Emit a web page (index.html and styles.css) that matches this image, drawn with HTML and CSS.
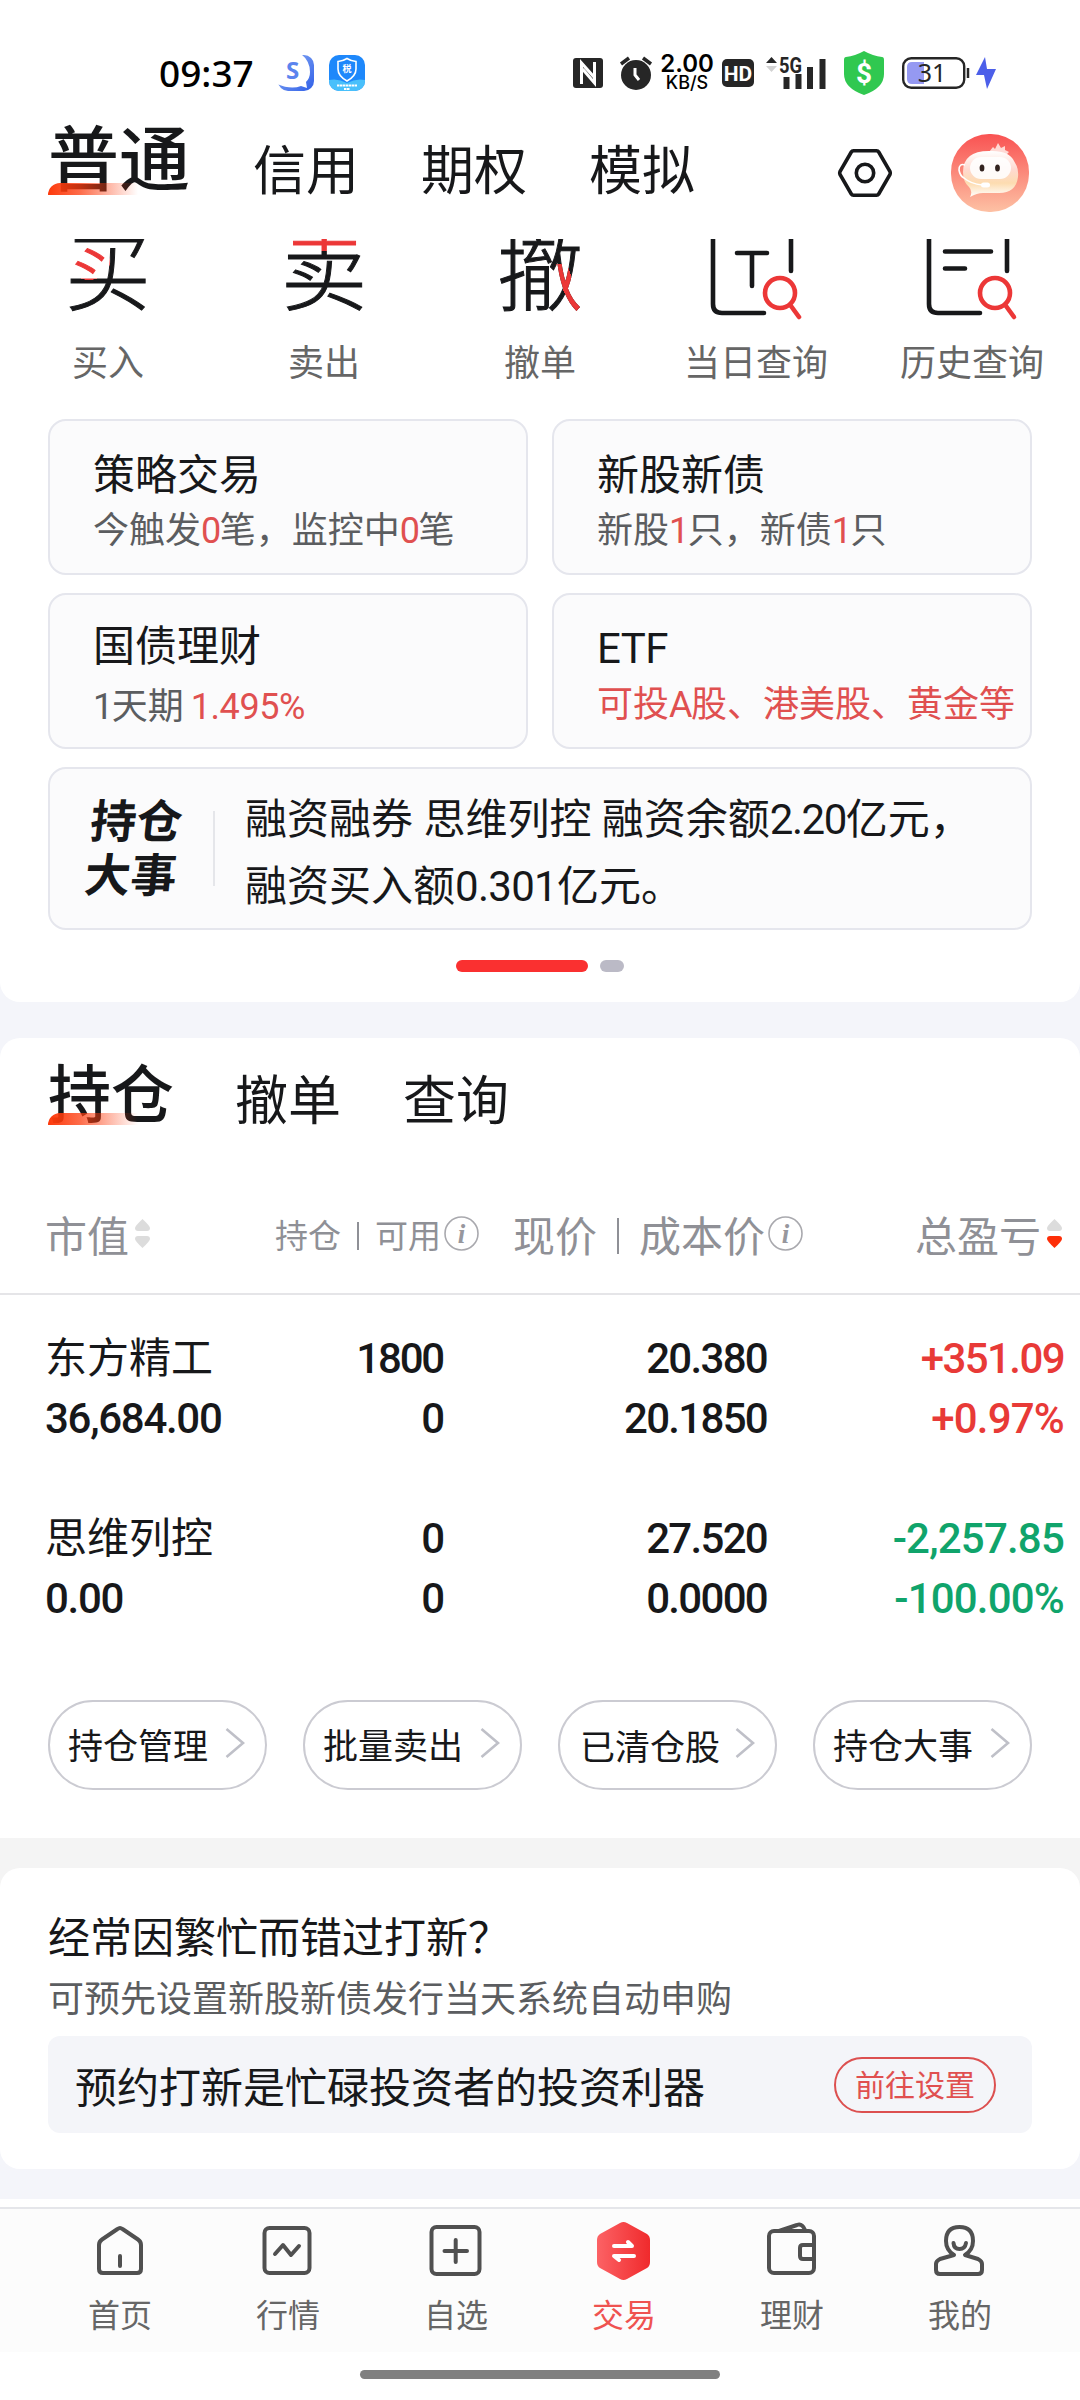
FILE: index.html
```html
<!DOCTYPE html>
<html lang="zh-CN">
<head>
<meta charset="utf-8">
<title>交易</title>
<link rel="stylesheet" href="styles.css">
</head>
<body>
<div class="screen">
  <header class="statusbar">
    <div class="status-left">
      <span class="clock">09:37</span>
      <svg class="app-icon" viewBox="0 0 36 36"><defs><linearGradient id="ga" x1="0" y1="0" x2="1" y2="1"><stop offset="0" stop-color="#8fb0f5"/><stop offset="1" stop-color="#2f5fe8"/></linearGradient></defs><rect width="36" height="36" rx="10" fill="url(#ga)"/><path d="M-1 -1H23Q32 6 32 17Q32 23 28 27L29 33L23 31Q13 35 -1 29Z" fill="#fff"/><text x="8" y="24" class="ic-s">S</text></svg>
      <svg class="app-icon app-icon-tax" viewBox="0 0 36 36"><rect width="36" height="36" rx="10" fill="#1e88fb"/><path d="M0 25Q9 23 18 28Q27 23 36 25V26A10 10 0 0 1 26 36H10A10 10 0 0 1 0 26Z" fill="#49c0fb"/><path d="M18 3.500Q22 6 27 6.500V14Q27 21 18 26Q9 21 9 14V6.500Q14 6 18 3.500Z" fill="none" stroke="#fff" stroke-width="1.600"/><text x="18" y="17" text-anchor="middle" class="ic-tax">税</text><path d="M8 30.500H28M15 34H21" stroke="#fff" stroke-width="2" stroke-dasharray="2.500 .5"/></svg>
    </div>
    <div class="status-right">
      <svg class="nfc" width="30" height="30" viewBox="0 0 30 30"><rect width="30" height="30" rx="3" fill="#262626"/><path d="M8.500 26V5L21 19M21.500 4V25L9.500 11" fill="none" stroke="#fff" stroke-width="3"/></svg>
      <svg class="alarm" width="32" height="34" viewBox="0 0 32 34"><circle cx="16" cy="19" r="15" fill="#262626"/><path d="M1 8L9 2M31 8L23 2" stroke="#262626" stroke-width="3.500"/><path d="M15 12V19L19 24" fill="none" stroke="#fff" stroke-width="3"/></svg>
      <div class="speed"><span class="speed-n">2.00</span><span class="speed-u">KB/S</span></div>
      <svg class="hd" width="32" height="28" viewBox="0 0 32 28"><rect width="32" height="28" rx="5" fill="#262626"/><text x="16" y="22" text-anchor="middle" class="ic-hd">HD</text></svg>
      <svg class="signal" width="60" height="34" viewBox="0 0 60 34"><path d="M0 7L5.500 1L11 7Z" fill="#262626"/><path d="M0 10L5.500 16L11 10Z" fill="#d2d2d2"/><text x="13" y="17" class="ic-5g" textLength="23" lengthAdjust="spacingAndGlyphs">5G</text><path d="M17.500 21h6v12h-6zM29.500 18h6v15h-6zM41 11h6v22h-6zM53.500 3h6v30h-6z" fill="#262626"/></svg>
      <svg class="shield" width="40" height="44" viewBox="0 0 40 44"><path d="M20 0Q29 5 38 6Q40 6 40 9V23Q40 37 20 44Q0 37 0 23V9Q0 6 2 6Q11 5 20 0Z" fill="#30c850"/><text x="20" y="32" text-anchor="middle" class="ic-dollar">$</text></svg>
      <svg class="battery" width="68" height="32" viewBox="0 0 68 32"><rect x="1.200" y="1.200" width="61" height="29.600" rx="8" fill="#fff" stroke="#262626" stroke-width="2.400"/><path d="M10 5H22V27H10Q5 27 5 22V10Q5 5 10 5Z" fill="#9599f2"/><path d="M66 11V21" stroke="#262626" stroke-width="2.500"/><text x="30" y="25" text-anchor="middle" class="ic-bat">31</text></svg>
      <svg class="bolt" width="20" height="32" viewBox="0 0 20 32"><path d="M9 0L0 18H8L11 32L20 12H11Z" fill="#4c5fe9"/></svg>
    </div>
  </header>

  <nav class="topnav">
    <div class="tab tab-active">普通</div>
    <div class="tab">信用</div>
    <div class="tab">期权</div>
    <div class="tab">模拟</div>
    <svg class="gear" width="54" height="48" viewBox="0 0 54 48"><path d="M15.500 1.800H38.500Q40 1.800 40.700 3L52 22.500Q52.600 24 52 25.500L40.700 45Q40 46.200 38.500 46.200H15.500Q14 46.200 13.300 45L2 25.500Q1.400 24 2 22.500L13.300 3Q14 1.800 15.500 1.800Z" fill="none" stroke="#17181a" stroke-width="3.600"/><circle cx="27" cy="24" r="8.700" fill="none" stroke="#17181a" stroke-width="3.600"/></svg>
    <svg class="avatar" width="78" height="78" viewBox="0 0 78 78"><defs><linearGradient id="gb" x1="0" y1="0" x2="0" y2="1"><stop offset="0" stop-color="#f95252"/><stop offset="1" stop-color="#fdc1a4"/></linearGradient><linearGradient id="gc" x1="0" y1="0" x2="0" y2="1"><stop offset="0" stop-color="#fff"/><stop offset=".4" stop-color="#ffd9d0"/><stop offset=".7" stop-color="#fddcb0"/><stop offset="1" stop-color="#fff"/></linearGradient></defs><rect width="78" height="78" rx="38" fill="url(#gb)"/><path d="M38 18L42 13L44 15L47 9L50 14L54 12V16L58 18L55 21Z" fill="#ffd9d4"/><path d="M12 38Q12 17 38 17Q58 16 63 27Q68 34 67 43Q65 59 48 59H32Q26 59 19 63Q22 57 18 53Q12 48 12 38Z" fill="url(#gc)"/><rect x="19" y="23" width="41" height="22" rx="11" fill="#fff" opacity=".88"/><ellipse cx="31" cy="34" rx="2.400" ry="3.600" fill="#33231f"/><ellipse cx="46.500" cy="34" rx="2.400" ry="3.600" fill="#33231f"/><path d="M14 31Q8 29 8 36Q9 42 13 44Q20 50 31 51" fill="none" stroke="#fff" stroke-width="1.600"/><rect x="30" y="48.500" width="9" height="5" rx="2.500" fill="#fff"/></svg>
  </nav>

  <section class="panel panel-top">
    <div class="quick">
      <div class="quick-item"><div class="quick-icon"><span class="glyph glyph-buy">买</span></div><span class="quick-label">买入</span></div>
      <div class="quick-item"><div class="quick-icon"><span class="glyph glyph-sell">卖</span></div><span class="quick-label">卖出</span></div>
      <div class="quick-item"><div class="quick-icon"><span class="glyph glyph-cancel">撤</span></div><span class="quick-label">撤单</span></div>
      <div class="quick-item"><div class="quick-icon"><svg width="92" height="82" viewBox="0 0 92 82"><g fill="none" stroke="#17181a" stroke-width="4.600" stroke-linecap="round"><path d="M3 -5V65Q3 74 12 74H54M81 -5V32M27 14H57M42 14V47"/></g><g fill="none" stroke="#ec3737" stroke-width="4.600" stroke-linecap="round"><circle cx="70" cy="54" r="15"/><path d="M81 67L89 78"/></g></svg></div><span class="quick-label">当日查询</span></div>
      <div class="quick-item"><div class="quick-icon"><svg width="92" height="82" viewBox="0 0 92 82"><g fill="none" stroke="#17181a" stroke-width="4.600" stroke-linecap="round"><path d="M3 -5V65Q3 74 12 74H54M81 -5V32M19 12.500H65M19 29.500H39"/></g><g fill="none" stroke="#ec3737" stroke-width="4.600" stroke-linecap="round"><circle cx="69" cy="54" r="15"/><path d="M80 67L88 78"/></g></svg></div><span class="quick-label">历史查询</span></div>
    </div>
    <div class="cards">
      <div class="card"><div class="card-title">策略交易</div><div class="card-sub">今触发<b class="num hot">0</b>笔，监控中<b class="num hot">0</b>笔</div></div>
      <div class="card"><div class="card-title">新股新债</div><div class="card-sub">新股<b class="num hot">1</b>只，新债<b class="num hot">1</b>只</div></div>
      <div class="card card-low"><div class="card-title">国债理财</div><div class="card-sub card-sub-low"><b class="num">1</b>天期 <b class="num num-rate hot">1.495%</b></div></div>
      <div class="card card-low"><div class="card-title card-title-etf"><span class="num num-etf">ETF</span></div><div class="card-sub card-sub-etf hot">可投<b class="num">A</b>股、港美股、黄金等</div></div>
      <div class="card card-news">
        <div class="news-logo"><span>持仓</span><span>大事</span></div>
        <div class="news-rule"></div>
        <div class="news-text">融资融券 思维列控 融资余额<span class="num">2.20</span>亿元，<br>融资买入额<span class="num num-buy">0.301</span>亿元。</div>
      </div>
    </div>
    <div class="pager"><i class="pager-on"></i><i class="pager-off"></i></div>
  </section>

  <section class="panel panel-holdings">
    <div class="subtabs">
      <div class="tab tab-active tab-active-sm">持仓</div>
      <div class="tab">撤单</div>
      <div class="tab">查询</div>
    </div>
    <div class="thead">
      <div class="th th-value">市值<svg class="sort" width="15" height="30" viewBox="0 0 15 30"><path d="M7.500 0Q15 7 15 9Q15 12 12 12H3Q0 12 0 9Q0 7 7.500 0Z" fill="#dcdcdc"/><path d="M7.500 29Q15 22 15 20Q15 17 12 17H3Q0 17 0 20Q0 22 7.500 29Z" fill="#dcdcdc"/></svg></div>
      <div class="th th-pos">持仓<i class="bar"></i>可用<svg class="info" width="35" height="35" viewBox="0 0 35 35"><circle cx="17.500" cy="17.500" r="16.500" fill="none" stroke="#a9a9ae" stroke-width="1.600"/><text x="17.500" y="26.500" text-anchor="middle" class="ic-i">i</text></svg></div>
      <div class="th th-price">现价<i class="bar bar-lg"></i>成本价<svg class="info" width="35" height="35" viewBox="0 0 35 35"><circle cx="17.500" cy="17.500" r="16.500" fill="none" stroke="#a9a9ae" stroke-width="1.600"/><text x="17.500" y="26.500" text-anchor="middle" class="ic-i">i</text></svg></div>
      <div class="th th-pl">总盈亏<svg class="sort" width="15" height="30" viewBox="0 0 15 30"><path d="M7.500 0Q15 7 15 9Q15 12 12 12H3Q0 12 0 9Q0 7 7.500 0Z" fill="#dcdcdc"/><path d="M7.500 29Q15 22 15 20Q15 17 12 17H3Q0 17 0 20Q0 22 7.500 29Z" fill="#fd2e08"/></svg></div>
    </div>
    <div class="rows">
      <div class="row">
        <div class="cell cell-value"><span class="stock">东方精工</span><span>36,684.00</span></div>
        <div class="cell cell-r cell-pos"><span>1800</span><span>0</span></div>
        <div class="cell cell-r"><span>20.380</span><span>20.1850</span></div>
        <div class="cell cell-r cell-pl up"><span class="tight">+351.09</span><span>+0.97%</span></div>
      </div>
      <div class="row">
        <div class="cell cell-value"><span class="stock">思维列控</span><span>0.00</span></div>
        <div class="cell cell-r cell-pos"><span>0</span><span>0</span></div>
        <div class="cell cell-r"><span>27.520</span><span>0.0000</span></div>
        <div class="cell cell-r cell-pl down"><span>-2,257.85</span><span>-100.00%</span></div>
      </div>
    </div>
    <div class="actions">
      <div class="pill">持仓管理<svg width="20" height="30" viewBox="0 0 20 30"><path d="M1.500 1L18 15L1.500 29" class="chev"/></svg></div>
      <div class="pill">批量卖出<svg width="20" height="30" viewBox="0 0 20 30"><path d="M1.500 1L18 15L1.500 29" class="chev"/></svg></div>
      <div class="pill pill-cleared"><span>已清仓股</span><svg width="20" height="30" viewBox="0 0 20 30"><path d="M1.500 1L18 15L1.500 29" class="chev"/></svg></div>
      <div class="pill">持仓大事<svg width="20" height="30" viewBox="0 0 20 30"><path d="M1.500 1L18 15L1.500 29" class="chev"/></svg></div>
    </div>
  </section>

  <div class="promo-wrap">
    <section class="promo">
      <div class="promo-title">经常因繁忙而错过打新？</div>
      <div class="promo-sub">可预先设置新股新债发行当天系统自动申购</div>
      <div class="promo-box"><span>预约打新是忙碌投资者的投资利器</span><span class="promo-btn">前往设置</span></div>
    </section>
  </div>

  <nav class="bottomnav">
    <div class="nav-item"><svg width="60" height="60" viewBox="0 0 60 60"><path class="ln" d="M27.500 7Q30 5 32.500 7L48 17.500Q51 19.500 51 23V47Q51 51 47 51H13Q9 51 9 47V23Q9 19.500 12 17.500ZM30 34V44"/></svg><span>首页</span></div>
    <div class="nav-item"><svg width="60" height="60" viewBox="0 0 60 60"><rect class="ln" x="6.500" y="6" width="45" height="45" rx="5"/><path class="ln" d="M17 32L25 23L33 33L41 24"/></svg><span>行情</span></div>
    <div class="nav-item"><svg width="60" height="60" viewBox="0 0 60 60"><rect class="ln" x="5.500" y="5" width="48" height="47" rx="5"/><path class="ln" d="M18.500 29H41M29.700 18V40"/></svg><span>自选</span></div>
    <div class="nav-item nav-on"><svg width="60" height="60" viewBox="0 0 60 60"><defs><linearGradient id="gd" x1="0" y1="0" x2="1" y2="0"><stop offset="0" stop-color="#fc6265"/><stop offset="1" stop-color="#f02a2c"/></linearGradient></defs><path d="M26 1Q29.500 -1 33 1L53 12Q56 14 56 18V40Q56 44 53 46L33 57Q29.500 59 26 57L6 46Q3 44 3 40V18Q3 14 6 12Z" fill="url(#gd)"/><path d="M20 24H38L34 20M40 34H20L25 38" fill="none" stroke="#fff" stroke-width="4" stroke-linecap="round" stroke-linejoin="round"/></svg><span>交易</span></div>
    <div class="nav-item"><svg width="60" height="60" viewBox="0 0 60 60"><rect class="ln" x="7" y="9" width="45" height="42" rx="5"/><path class="ln" d="M17 9L35 3Q40 1 43 8M51 23H41Q38 23 38 26V34Q38 37 41 37H51"/></svg><span>理财</span></div>
    <div class="nav-item"><svg width="60" height="60" viewBox="0 0 60 60"><path class="ln" d="M24 33Q16 28 16 19Q16 5 29.500 5Q43 5 43 19Q43 28 35 33L48 37Q52 39 52 42V48Q52 52 48 52H10Q6 52 6 48V42Q6 39 10 37L24 33M23.500 21Q24 27 29.500 27Q35 27 36 21"/></svg><span>我的</span></div>
  </nav>
  <div class="gesture"><i></i></div>
</div>
</body>
</html>
```
FILE: styles.css
```css
* { box-sizing: border-box; }
body {
  margin: 0;
  background: #fff;
  font-family: Roboto, "Noto Sans CJK SC", sans-serif;
  color: #17181a;
}
.screen {
  width: 1080px;
  height: 2400px;
  overflow: hidden;
  display: flex;
  flex-direction: column;
  background: #f4f5fa;
}
svg { display: block; flex: none; overflow: visible; }
b { font-weight: 400; }
i { font-style: normal; display: block; }
.num { letter-spacing: -1.5px; }
.hot { color: #e05050; }

/* status bar */
.statusbar {
  height: 110px;
  flex: none;
  background: #fff;
  display: flex;
  justify-content: space-between;
  padding: 50px 84px 0 159px;
}
.status-left { display: flex; height: 46px; align-items: center; }
.clock { font: 500 37px/46px "Noto Sans", sans-serif; color: #000; width: 119px; }
.app-icon { width: 36px; height: 36px; }
.app-icon-tax { margin-left: 15px; }
.status-right { display: flex; height: 46px; align-items: center; }
.alarm { margin: 0 9px 0 17px; }
.speed { display: flex; flex-direction: column; align-items: center; width: 52px; color: #000; font-family: Inter, sans-serif; }
.speed-n { font-size: 24px; line-height: 20px; font-weight: 600; }
.speed-u { font-size: 18px; line-height: 18px; font-weight: 500; }
.hd { margin-left: 9px; }
.signal { margin-left: 12px; }
.shield { margin-left: 18px; }
.battery { margin-left: 18px; }
.bolt { margin-left: 6px; }
.ic-s { font: 700 24px "Open Sans", sans-serif; fill: #5b84ee; }
.ic-tax { font: 700 9px "Noto Sans CJK SC", sans-serif; fill: #fff; }
.ic-hd { font: 700 21px Roboto, sans-serif; fill: #fff; }
.ic-5g { font: 700 22px Roboto, sans-serif; fill: #262626; }
.ic-dollar { font: 700 28px Roboto, sans-serif; fill: #fff; }
.ic-bat { font: 400 25px "Noto Sans", sans-serif; fill: #262626; }
.ic-i { font: italic 700 27px "Liberation Serif", serif; fill: #97979d; }

/* tabs */
.topnav {
  height: 129px;
  flex: none;
  background: #fff;
  display: flex;
  padding-left: 48px;
}
.tab { font-size: 53px; line-height: 60px; margin-top: 32px; width: 168px; }
.tab-active {
  position: relative;
  font-size: 71px;
  font-weight: 500;
  line-height: 80px;
  margin-top: 11px;
  width: 205px;
}
.tab-active::after {
  content: "";
  position: absolute;
  left: 0;
  top: 62px;
  width: 90px;
  height: 12px;
  border-radius: 12px 0 0 0;
  background: linear-gradient(90deg, #fd3a0c, rgba(253, 58, 12, .75) 35%, rgba(253, 58, 12, 0));
}
.gear { margin: 39px 0 0 81px; }
.avatar { margin: 24px 0 0 59px; }

/* shortcuts */
.panel { background: #fff; flex: none; }
.panel-top { height: 763px; border-radius: 0 0 20px 20px; }
.quick { display: flex; height: 180px; }
.quick-item { width: 216px; display: flex; flex-direction: column; align-items: center; }
.quick-icon { width: 92px; height: 99px; overflow: hidden; display: flex; justify-content: center; }
.glyph {
  font: 300 86px/98px "Noto Sans CJK SC", sans-serif;
  height: 98px;
  margin-top: -21px;
  color: transparent;
  -webkit-text-stroke: 1px transparent;
  -webkit-background-clip: text;
  background-clip: text;
}
.glyph-buy { background-image: radial-gradient(ellipse 21px 18px at 24px 44px, #ec3737 99%, #17181a 100%); }
.glyph-sell { background-image: linear-gradient(#ec3737 33px, #17181a 33px); }
.glyph-cancel {
  background:
    linear-gradient(71deg, transparent 35%, #ec3737 35%, #ec3737 65%, transparent 65%) 59px 46px / 26px 48px no-repeat,
    #17181a;
  -webkit-background-clip: text;
  background-clip: text;
}
.quick-label { font-size: 36px; line-height: 52px; color: #666; }

/* cards */
.cards { display: grid; grid-template-columns: 480px 480px; gap: 18px 24px; padding-left: 48px; }
.card {
  height: 156px;
  border: 2px solid #e5e6ed;
  border-radius: 18px;
  background: #fbfbfc;
  padding: 25px 0 0 43px;
  white-space: nowrap;
}
.card-title { font-size: 42px; line-height: 60px; }
.card-title-etf { padding-top: 2px; margin-bottom: -2px; }
.card-low { padding-top: 22px; }
.card-sub { font-size: 36px; line-height: 52px; margin-top: -1px; color: #5b5d60; }
.card-sub-low { margin-top: 4px; }
.card-sub.hot { color: #e05050; }
.card-sub-etf { margin-top: 2px; }
.num-rate { letter-spacing: -.4px; margin-left: -2px; }
.num-etf { letter-spacing: -.5px; }
.num-buy { letter-spacing: -.7px; }
.card-news { grid-column: 1 / 3; height: 163px; padding: 17px 0 0 38px; display: flex; }
.news-logo {
  width: 94px;
  height: 100px;
  margin-top: 9px;
  font-size: 46px;
  font-weight: 700;
  line-height: 54px;
  display: flex;
  flex-direction: column;
  transform: skewX(-6deg);
}
.news-rule { width: 2px; height: 75px; margin: 25px 0 0 31px; background: #e5e6ea; }
.news-text { margin-left: 30px; font-size: 42px; line-height: 67px; }
.pager { display: flex; gap: 12px; margin: 30px 0 0 456px; }
.pager i { height: 12px; border-radius: 6px; }
.pager-on { width: 132px; background: #fa3030; }
.pager-off { width: 24px; background: #bbbac6; }

/* holdings */
.panel-holdings { height: 800px; margin-top: 36px; border-radius: 20px 20px 0 0; }
.subtabs { display: flex; height: 165px; padding-left: 48px; }
.subtabs .tab { margin-top: 34px; }
.subtabs .tab-active { font-size: 63px; width: 187px; margin-top: 18px; }
.subtabs .tab-active::after { top: 57px; }
.thead { display: flex; height: 92px; border-bottom: 2px solid #e5e5e8; padding-left: 45px; }
.th { display: flex; height: 61px; align-items: center; color: #8f9096; font-size: 42px; white-space: nowrap; }
.sort { margin: 0 0 0 6px; }
.th-value { width: 230px; }
.th-pos { width: 238px; font-size: 33px; }
.th-price { width: 402px; }
.bar { width: 2px; height: 28px; margin: 4px 16px 0; background: #8f9096; }
.bar-lg { height: 36px; margin: 4px 20px 0; }
.info { margin: -1px 0 0 3px; }
.rows { padding: 34px 16px 0 45px; display: flex; flex-direction: column; gap: 60px; }
.row { display: grid; grid-template-columns: 201px 197px 324px 297px; }
.cell { display: flex; flex-direction: column; font-size: 42px; line-height: 60px; font-weight: 500; letter-spacing: -1.7px; white-space: nowrap; }
.cell-r { align-items: flex-end; }
.cell-value { letter-spacing: -1.3px; }
.cell-pos { letter-spacing: -2.2px; }
.cell-pl { letter-spacing: -.8px; }
.tight { letter-spacing: -1.6px; }
.stock { font-weight: 400; letter-spacing: 0; }
.up { color: #e83a37; }
.down { color: #10a46b; }
.actions { display: flex; gap: 36px; padding: 71px 48px 0; }
.pill {
  width: 219px;
  height: 90px;
  border: 2px solid #cbcbd2;
  border-radius: 45px;
  display: flex;
  align-items: center;
  padding: 0 0 4px 18px;
  font-size: 35px;
  white-space: nowrap;
}
.pill svg { margin-left: 17px; }
.pill-cleared span { margin: 3px -2px 0 2px; }
.chev { fill: none; stroke: #bfc0c8; stroke-width: 2.6; }

/* promo */
.promo-wrap { background: linear-gradient(#f4f4f4 50%, #f4f5fa 50%); padding: 30px 0; flex: none; }
.promo { height: 301px; background: #fff; border-radius: 20px; padding: 41px 48px 0; }
.promo-title { font-size: 42px; line-height: 60px; }
.promo-sub { font-size: 36px; line-height: 52px; margin-top: 5px; color: #5b5d60; }
.promo-box {
  height: 97px;
  margin-top: 10px;
  border-radius: 12px;
  background: #f4f5f9;
  display: flex;
  align-items: center;
  justify-content: space-between;
  padding: 0 36px 0 27px;
  font-size: 42px;
}
.promo-btn {
  width: 162px;
  height: 56px;
  border: 2px solid #dc5050;
  border-radius: 28px;
  color: #e05050;
  font-size: 30px;
  line-height: 54px;
  text-align: center;
}

/* bottom navigation */
.bottomnav {
  height: 153px;
  flex: none;
  border-top: 8px solid #fff;
  background: #fcfcfc;
  box-shadow: inset 0 2px #e5e6ea;
  display: flex;
  padding: 15px 36px 0;
}
.nav-item { width: 168px; display: flex; flex-direction: column; align-items: center; font-size: 32px; line-height: 46px; color: #666; }
.nav-item svg { margin-bottom: 11px; }
.nav-on { color: #ef5350; }
.ln { fill: none; stroke: #505050; stroke-width: 4; stroke-linecap: round; stroke-linejoin: round; }
.gesture { flex: 1; background: #fff; display: flex; justify-content: center; padding-top: 18px; }
.gesture i { width: 360px; height: 9px; border-radius: 5px; background: #808080; }
```
